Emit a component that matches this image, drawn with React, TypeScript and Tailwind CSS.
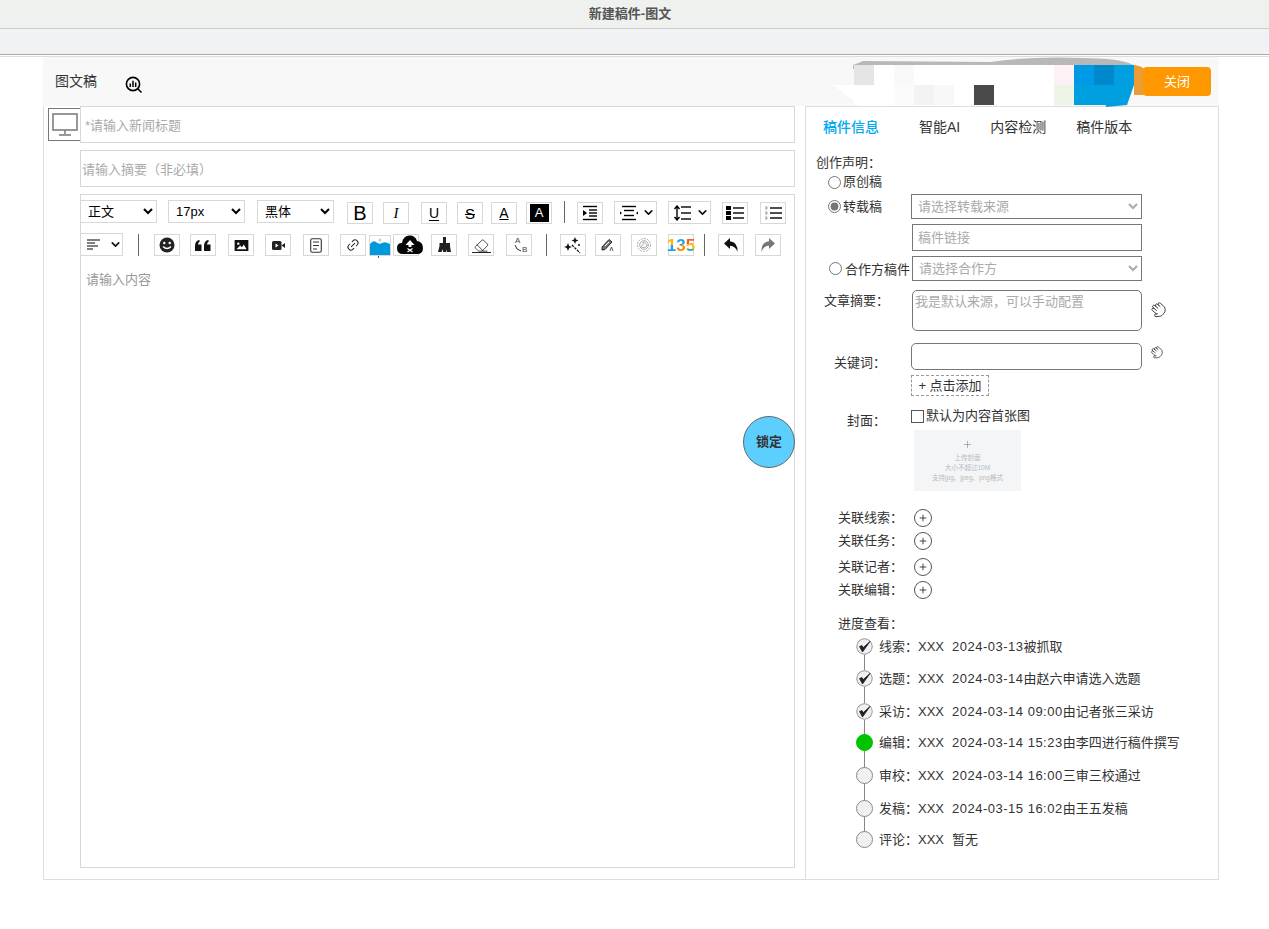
import React from "react";
import { ChevronDown, Eraser, Hand, Link2, Plus } from "lucide-react";

const Btn = ({ className = "", children }: { className?: string; children?: React.ReactNode }) => (
  <div className={`w-[26px] h-[22px] shrink-0 border border-[#d8d8d8] bg-white flex items-center justify-center text-black ${className}`}>{children}</div>
);
const Divider = ({ className = "" }: { className?: string }) => <div className={`w-px h-[22px] bg-[#666] shrink-0 ${className}`} />;
const Sel = ({ value, className = "" }: { value: string; className?: string }) => (
  <select defaultValue={value} className={`h-[23px] shrink-0 border border-[#d8d8d8] bg-white text-[13px] text-black pl-[3px] ${className}`}>
    <option>{value}</option>
  </select>
);
const Lines = ({ ys, x1 = 3, x2 = 17 }: { ys: number[]; x1?: number; x2?: number }) => (
  <>{ys.map((y) => <line key={y} x1={x1} x2={x2} y1={y} y2={y} stroke="#000" strokeWidth="1.4" />)}</>
);
const Chev = () => <ChevronDown size={13} strokeWidth={3} className="text-[#111] shrink-0" />;

const Check = () => (
  <svg width="17" height="17" viewBox="0 0 17 17" className="shrink-0 bg-white rounded-full">
    <circle cx="8.5" cy="8.5" r="7.8" fill="#f0f0f0" stroke="#888" />
    <path d="M3.5 8.5 L6.5 14 L14 3.5 L7.2 9.6 L6 7.6 Z" fill="#222" stroke="#222" strokeWidth="0.8" strokeLinejoin="round" />
  </svg>
);
const Dot = ({ green }: { green?: boolean }) => (
  <div className={`w-[17px] h-[17px] shrink-0 rounded-full border ${green ? "bg-[#00c400] border-[#00c400]" : "bg-[#f0f0f0] border-[#888]"}`} />
);

const steps: { label: string; date: string; rest: string; mt: string; kind: "check" | "green" | "dot" }[] = [
  { label: "线索", date: "2024-03-13", rest: "被抓取", mt: "mt-0", kind: "check" },
  { label: "选题", date: "2024-03-14", rest: "由赵六申请选入选题", mt: "mt-[15px]", kind: "check" },
  { label: "采访", date: "2024-03-14 09:00", rest: "由记者张三采访", mt: "mt-[16px]", kind: "check" },
  { label: "编辑", date: "2024-03-14 15:23", rest: "由李四进行稿件撰写", mt: "mt-[14px]", kind: "green" },
  { label: "审校", date: "2024-03-14 16:00", rest: "三审三校通过", mt: "mt-[16px]", kind: "dot" },
  { label: "发稿", date: "2024-03-15 16:02", rest: "由王五发稿", mt: "mt-[16px]", kind: "dot" },
  { label: "评论", date: "", rest: "暂无", mt: "mt-[14px]", kind: "dot" },
];

const Relation = ({ label, mt }: { label: string; mt: string }) => (
  <div className={`flex items-center h-[18px] pl-[32px] ${mt}`}>
    <span className="w-[76px] shrink-0">{label}：</span>
    <div className="w-[18px] h-[18px] rounded-full border border-[#555] flex items-center justify-center">
      <Plus size={10} strokeWidth={2} className="text-[#222]" />
    </div>
  </div>
);

export default function App() {
  return (
    <div className="min-h-[929px] bg-white font-['Liberation_Sans','Noto_Sans_CJK_SC',sans-serif] text-[#333]">
      <div className="h-[29px] pr-[9px] bg-[#eef1ee] border-b border-[#ccc] flex items-center justify-center text-[13px] font-bold text-[#555]">新建稿件-图文</div>
      <div className="h-[26px] bg-[#f1f2f4] border-b border-[#aaa]" />
      <div className="h-[2px] border-b border-[#ddd]" />
      <div className="ml-[43px] w-[1176px]">
        <div className="relative h-[49px] bg-[#f8f8f8] flex items-center pl-[12px]">
          <span className="text-[14px] text-[#333]">图文稿</span>
          <svg width="18" height="18" viewBox="0 0 18 18" className="ml-[28px] mt-[6px]">
            <circle cx="8" cy="8" r="6.6" fill="none" stroke="#000" strokeWidth="1.6" />
            <path d="M5.3 7.5V11M8 4.8V11M10.7 6.5V11" stroke="#000" strokeWidth="1.5" />
            <path d="M12.8 12.8L16.5 16.5" stroke="#000" strokeWidth="1.6" />
          </svg>
          <svg width="320" height="52" viewBox="0 0 320 52" className="absolute left-[788px] top-0">
            <path d="M22 8 L32 4 L160 5 Q200 -1 250 1 Q290 1 302 8 L302 12 L22 12 Z" fill="#b8b8b8" />
            <path d="M2 28 L223 28 L223 49 L30 49 Z" fill="#fff" />
            <rect x="23" y="8" width="220" height="40" fill="#fff" />
            <rect x="23" y="8" width="20" height="20" fill="#e5e5e5" />
            <rect x="63" y="8" width="20" height="20" fill="#f9f9f9" />
            <rect x="63" y="28" width="20" height="20" fill="#fbfbfb" />
            <rect x="83" y="28" width="20" height="20" fill="#f3f3f3" />
            <rect x="103" y="28" width="20" height="20" fill="#f8f8f8" />
            <rect x="143" y="28" width="20" height="20" fill="#4a4a4a" />
            <rect x="223" y="8" width="20" height="20" fill="#fdf1f6" />
            <rect x="223" y="28" width="20" height="20" fill="#eef5e6" />
            <rect x="243" y="8" width="20" height="20" fill="#0099e6" />
            <rect x="263" y="8" width="20" height="20" fill="#0088cc" />
            <rect x="283" y="8" width="20" height="20" fill="#009fe0" />
            <rect x="243" y="28" width="43" height="20" fill="#009fe0" />
            <path d="M285 28 L303 28 L296 48 L275 50 L274 44 Z" fill="#009fe0" />
            <path d="M303 8 Q312 9 315 14 L315 38 L303 38 Z" fill="#eb9c32" />
          </svg>
          <div className="absolute left-[1100px] top-[10px] w-[68px] h-[29px] rounded-[4px] bg-[#ff9800] text-white text-[13px] flex items-center justify-center">关闭</div>
        </div>

        <div className="h-[774px] flex border-l border-r border-b border-[#ddd]">
          <div className="w-[761px] shrink-0 flex">
            <div className="ml-[4px] mt-[2px] w-[33px] h-[33px] shrink-0 border border-[#777] flex items-center justify-center">
              <svg width="26" height="25" viewBox="0 0 26 25">
                <rect x="1" y="2" width="24" height="16" fill="none" stroke="#777" strokeWidth="1.5" />
                <path d="M13 18V22M7 23H19" stroke="#777" strokeWidth="1.5" />
              </svg>
            </div>
            <div className="-ml-px w-[715px] shrink-0">
              <div className="h-[37px] border border-[#d8d8d8] flex items-center pl-[4px] pt-[2px] text-[13px] text-[#aaa]">*请输入新闻标题</div>
              <div className="h-[37px] mt-[7px] border border-[#d8d8d8] flex items-center pl-[1px] pt-[2px] text-[13px] text-[#aaa]">请输入摘要（非必填）</div>
              <div className="relative h-[674px] mt-[7px] border border-[#d8d8d8]">
                <div className="flex items-start pt-[5px] h-[28px]">
                  <Sel value="正文" className="w-[77px] -ml-px" />
                  <Sel value="17px" className="w-[77px] ml-[11px]" />
                  <Sel value="黑体" className="w-[77px] ml-[12px]" />
                  <Btn className="ml-[13px] mt-[2px] text-[20px] text-[#222] leading-none">B</Btn>
                  <Btn className="ml-[10px] mt-[2px] text-[15px] italic font-['Liberation_Serif'] leading-none">I</Btn>
                  <Btn className="ml-[12px] mt-[2px] text-[14px] underline underline-offset-2 leading-none text-[#555]">U</Btn>
                  <Btn className="ml-[10px] mt-[2px] text-[15px] line-through leading-none text-[#555]">S</Btn>
                  <Btn className="ml-[8px] mt-[2px] text-[14px] underline underline-offset-1 leading-none text-[#555]">A</Btn>
                  <Btn className="ml-[9px] mt-[2px]"><span className="w-[19px] h-[18px] bg-black text-white text-[13px] leading-[18px] text-center">A</span></Btn>
                  <Divider className="ml-[12px] mt-[1px]" />
                  <Btn className="ml-[12px] mt-[2px]">
                    <svg width="20" height="16" viewBox="0 0 20 16"><Lines ys={[1.5, 14.5]} /><Lines ys={[5, 8, 11]} x1={9} /><path d="M3 5L7 8L3 11Z" fill="#000" /></svg>
                  </Btn>
                  <div className="ml-[11px] mt-[1px] w-[43px] h-[23px] border border-[#d8d8d8] flex items-center pl-[4px] gap-[3px] shrink-0">
                    <svg width="20" height="16" viewBox="0 0 20 16"><Lines ys={[1.5, 14.5]} /><Lines ys={[5.5, 10.5]} x1={5} x2={15} /><path d="M1 6.5L3 8L1 9.5ZM19 6.5L17 8L19 9.5Z" fill="#000" /></svg>
                    <Chev />
                  </div>
                  <div className="ml-[11px] mt-[1px] w-[43px] h-[23px] border border-[#d8d8d8] flex items-center pl-[3px] gap-[4px] shrink-0">
                    <svg width="20" height="16" viewBox="0 0 20 16"><Lines ys={[2, 8, 14]} x1={9} x2={19} /><path d="M5 1V15M2.5 4L5 1L7.5 4M2.5 12L5 15L7.5 12" stroke="#000" strokeWidth="1.4" fill="none" /></svg>
                    <Chev />
                  </div>
                  <Btn className="ml-[11px] mt-[2px]">
                    <svg width="20" height="14" viewBox="0 0 20 14"><Lines ys={[2, 7, 12]} x1={8} x2={19} /><rect x="1" y="0" width="5" height="4" /><rect x="1" y="5" width="5" height="4" /><rect x="1" y="10" width="5" height="4" /></svg>
                  </Btn>
                  <Btn className="ml-[12px] mt-[2px]">
                    <svg width="20" height="14" viewBox="0 0 20 14"><Lines ys={[2, 7, 12]} x1={7} x2={19} /><path d="M2 1H4V3H2M2 6H4V8H2M2 11H4V13H2" stroke="#777" strokeWidth=".7" fill="none" /></svg>
                  </Btn>
                </div>
                <div className="flex items-start h-[24px] mt-[10px]">
                  <div className="-ml-px w-[43px] h-[23px] border border-[#d8d8d8] flex items-center pl-[6px] gap-[9px] shrink-0">
                    <svg width="13" height="11" viewBox="0 0 13 11"><path d="M0 1H13M0 4H8M0 7H11M0 10H6" stroke="#000" strokeWidth="1" /></svg>
                    <Chev />
                  </div>
                  <Divider className="ml-[15px] mt-[1px]" />
                  <Btn className="ml-[15px] mt-[1px]">
                    <svg width="16" height="16" viewBox="0 0 16 16"><circle cx="8" cy="8" r="7.5" fill="#222" /><circle cx="5.3" cy="6" r="1.2" fill="#fff" /><circle cx="10.7" cy="6" r="1.2" fill="#fff" /><path d="M4 9.5Q8 13.5 12 9.5" stroke="#fff" strokeWidth="1.3" fill="none" /></svg>
                  </Btn>
                  <Btn className="ml-[10px] mt-[1px]">
                    <svg width="16" height="11" viewBox="0 0 16 11"><path d="M0 6Q0 1 4 0L5 1Q3 2.5 3 4.5H6.5V11H0ZM9 6Q9 1 13 0L14 1Q12 2.5 12 4.5H15.5V11H9Z" fill="#111" /></svg>
                  </Btn>
                  <Btn className="ml-[12px] mt-[1px]">
                    <svg width="15" height="11" viewBox="0 0 15 12"><rect width="15" height="12" fill="#111" /><circle cx="4" cy="4" r="1.3" fill="#fff" /><path d="M2 10L6 6L8 8L10 5L13 10Z" fill="#fff" /></svg>
                  </Btn>
                  <Btn className="ml-[11px] mt-[1px]">
                    <svg width="13" height="9" viewBox="0 0 13 9"><rect width="9.5" height="9" rx="1.5" fill="#222" /><path d="M9.5 4.5L13 2V7Z" fill="#222" /><path d="M3.5 2.5L6.5 4.5L3.5 6.5Z" fill="#fff" /></svg>
                  </Btn>
                  <Btn className="ml-[12px] mt-[1px]">
                    <svg width="12" height="15" viewBox="0 0 12 15"><rect x=".7" y=".7" width="10.6" height="13.6" rx="1.5" fill="none" stroke="#333" strokeWidth="1.1" /><path d="M3 4H9M3 7.5H9M3 11H7" stroke="#333" /></svg>
                  </Btn>
                  <Btn className="ml-[11px] mt-[1px]"><Link2 size={14} strokeWidth={1.7} className="-rotate-45 text-[#222]" /></Btn>
                  <div className="relative ml-[3px] mt-[2px] w-[22px] h-[21px] shrink-0 border border-[#d8d8d8] bg-white">
                    <svg width="20" height="19" viewBox="0 0 20 19" className="block">
                      <circle cx="10" cy="4" r="1.5" fill="#ccc" />
                      <path d="M0 19V8Q3 4 6 6Q9 9 12 7Q15 5 20 8V19Z" fill="#0099dd" />
                    </svg>
                    <div className="absolute left-[8px] top-[20px] w-px h-[2px] bg-[#555]" />
                  </div>
                  <div className="relative ml-[2px] mt-[1px] shrink-0">
                    <Btn />
                    <svg width="26" height="21" viewBox="0 0 26 21" className="absolute left-[4px] top-0">
                      <path d="M6 20Q0 20 0 14Q0 9 5 9Q6 2 12 1.5Q18 1 20 7Q26 8 26 14Q26 20 20 20Z" fill="#050505" />
                      <path d="M13 6L8.5 11H11.5V13H14.5V11H17.5Z" fill="#fff" />
                      <path d="M10.5 14.5L15.5 18M15.5 14.5L10.5 18" stroke="#fff" strokeWidth="1.2" />
                    </svg>
                  </div>
                  <Btn className="ml-[12px] mt-[1px]">
                    <svg width="15" height="16" viewBox="0 0 15 16"><path d="M6 0H9V6H13V9L14 15H10V12.5L9 15H6V12L4.5 15H1L2.5 9V6H6Z" fill="#222" /></svg>
                  </Btn>
                  <Btn className="ml-[11px] mt-[1px]">
                    <div className="flex flex-col items-center"><Eraser size={15} strokeWidth={1.3} className="text-[#222] -mb-[1px]" /><div className="w-[19px] h-px bg-[#222]" /></div>
                  </Btn>
                  <Btn className="ml-[12px] mt-[1px] relative">
                    <span className="absolute left-[8px] top-[2px] text-[8px] leading-none text-[#444]">A</span>
                    <span className="absolute left-[15px] top-[11px] text-[8px] leading-none text-[#444]">B</span>
                    <svg width="8" height="8" viewBox="0 0 8 8" className="absolute left-[7px] top-[10px]"><path d="M1 0Q2 5 7 6" stroke="#333" fill="none" /></svg>
                  </Btn>
                  <Divider className="ml-[14px] mt-[1px]" />
                  <Btn className="ml-[13px] mt-[1px]">
                    <svg width="18" height="17" viewBox="0 0 18 17">
                      <path d="M8 8L16 16" stroke="#111" strokeWidth="1.2" strokeDasharray="2.5 1" />
                      <path d="M11 0L12 2.5L14.5 3.5L12 4.5L11 7L10 4.5L7.5 3.5L10 2.5Z" fill="#111" />
                      <path d="M4 6L5.2 9L8 10L5.2 11L4 14L2.8 11L0 10L2.8 9Z" fill="#111" />
                      <circle cx="15" cy="8" r="1" fill="#111" />
                    </svg>
                  </Btn>
                  <Btn className="ml-[9px] mt-[1px]">
                    <svg width="14" height="14" viewBox="0 0 14 14"><path d="M1 9L8 1.5L11 4L4 11.5L1 12Z" fill="#777" stroke="#222" /><path d="M4 8L8 4" stroke="#fff" /><path d="M9 13L10.5 9L12 13" fill="none" stroke="#333" strokeWidth=".8" /></svg>
                  </Btn>
                  <Btn className="ml-[10px] mt-[1px]">
                    <svg width="16" height="16" viewBox="0 0 16 16" fill="none" stroke="#888" strokeWidth=".7"><circle cx="8" cy="8" r="6.5" strokeDasharray="2 1" /><circle cx="8" cy="8" r="4.3" /><path d="M6 6Q9 4 10.5 7T8 10.5T6 8.5T8.5 7" /></svg>
                  </Btn>
                  <Btn className="ml-[11px] mt-[1px] text-[17px] font-bold leading-none">
                    <span className="bg-[linear-gradient(#ffb300_50%,#1aa3e8_50%)] bg-clip-text text-transparent">1</span>
                    <span className="bg-[linear-gradient(#1aa3e8_50%,#ff8a00_50%)] bg-clip-text text-transparent">3</span>
                    <span className="bg-[linear-gradient(#ff5a1f_40%,#ffc400_40%,#ffc400_70%,#1aa3e8_70%)] bg-clip-text text-transparent">5</span>
                  </Btn>
                  <Divider className="ml-[10px] mt-[1px]" />
                  <Btn className="ml-[13px] mt-[1px]">
                    <svg width="14" height="14" viewBox="0 0 14 14"><path d="M6 0V3.2Q14 4 13.5 14Q11.5 8 6 7.8V11L0 5.5Z" fill="#111" /></svg>
                  </Btn>
                  <Btn className="ml-[11px] mt-[1px]">
                    <svg width="14" height="14" viewBox="0 0 14 14"><path d="M8 0V3.2Q0 4 .5 14Q2.5 8 8 7.8V11L14 5.5Z" fill="#777" /></svg>
                  </Btn>
                </div>
                <div className="mt-[14px] pl-[5px] text-[13px] leading-[18px] text-[#999]">请输入内容</div>
                <div className="absolute right-[-1px] top-[221px] w-[52px] h-[52px] rounded-full bg-[#5ccfff] border border-[#666] flex items-center justify-center text-[13px] font-bold text-[#333]">锁定</div>
              </div>
            </div>
          </div>

          <div className="flex-1 border-l border-t border-[#ddd] text-[13px] text-[#333]">
            <div className="h-[40px] pt-[1px] flex items-center text-[14px] pl-[17px]">
              <span className="text-[#00aaee] font-medium">稿件信息</span>
              <span className="ml-[40px]">智能AI</span>
              <span className="ml-[30px]">内容检测</span>
              <span className="ml-[30px]">稿件版本</span>
            </div>
            <div className="mt-[8px] h-[16px] flex items-center pl-[10px]">创作声明：</div>
            <div className="mt-[3px] h-[16px] flex items-center pl-[22px]">
              <input type="radio" name="t" className="m-0 w-[13px] h-[13px] accent-[#777]" />
              <span className="ml-[2px]">原创稿</span>
            </div>
            <div className="mt-[4px] h-[25px] flex items-center pl-[22px]">
              <input type="radio" name="t" defaultChecked className="m-0 w-[13px] h-[13px] accent-[#777]" />
              <span className="ml-[2px] w-[68px] shrink-0 pt-[1px]">转载稿</span>
              <select disabled defaultValue="a" className="w-[231px] h-[25px] border border-[#777] bg-white text-[#aaa] text-[13px] pl-[2px]"><option value="a">请选择转载来源</option></select>
            </div>
            <div className="mt-[5px] ml-[106px] w-[230px] h-[27px] border border-[#777] flex items-center pl-[5px] text-[13px] text-[#aaa]">稿件链接</div>
            <div className="mt-[5px] h-[25px] flex items-center pl-[23px]">
              <input type="radio" name="t" className="m-0 w-[13px] h-[13px] accent-[#777]" />
              <span className="ml-[3px] w-[67px] shrink-0 whitespace-nowrap pt-[2px]">合作方稿件</span>
              <select disabled defaultValue="a" className="w-[230px] h-[25px] border border-[#777] bg-white text-[#aaa] text-[13px] pl-[2px]"><option value="a">请选择合作方</option></select>
            </div>
            <div className="mt-[9px] h-[41px] flex items-start pl-[18px]">
              <span className="w-[88px] shrink-0 mt-[1px]">文章摘要：</span>
              <div className="w-[230px] h-[41px] shrink-0 border border-[#777] rounded-[5px] pl-[2px] pt-[3px] text-[13px] leading-[16px] text-[#aaa]">我是默认来源，可以手动配置</div>
              <Hand size={16} strokeWidth={1.2} className="ml-[8px] mt-[12px] -rotate-[50deg] text-[#222]" />
            </div>
            <div className="mt-[12px] h-[27px] flex items-start pl-[28px]">
              <span className="w-[77px] shrink-0 mt-[12px] leading-[16px]">关键词：</span>
              <div className="w-[231px] h-[27px] shrink-0 border border-[#777] rounded-[5px] bg-white" />
              <Hand size={13} strokeWidth={1.2} className="ml-[8px] mt-[3px] -rotate-[50deg] text-[#222]" />
            </div>
            <div className="mt-[5px] ml-[105px] w-[78px] h-[21px] border border-dashed border-[#999] flex items-center justify-center text-[13px]">+ 点击添加</div>
            <div className="mt-[12px] flex items-start pl-[41px]">
              <span className="w-[64px] shrink-0 mt-[5px] leading-[16px]">封面：</span>
              <div>
                <div className="h-[16px] flex items-center text-[13px]">
                  <div className="w-[13px] h-[13px] border border-[#555] bg-white shrink-0" />
                  <span className="ml-[2px]">默认为内容首张图</span>
                </div>
                <div className="mt-[6px] ml-[3px] w-[107px] h-[61px] bg-[#f3f5f7] flex flex-col items-center justify-start">
                  <Plus size={11} strokeWidth={1} className="text-[#666] mt-[9px]" />
                  <span className="mt-[3px] text-[6.5px] leading-[10px] text-[#bbb] whitespace-nowrap">上传封面</span>
                  <span className="text-[6.5px] leading-[10px] text-[#b5bcc8] whitespace-nowrap">大小不超过10M</span>
                  <span className="text-[6.5px] leading-[10px] text-[#bbb] whitespace-nowrap">支持jpg、jpeg、png格式</span>
                </div>
              </div>
            </div>
            <Relation label="关联线索" mt="mt-[18px]" />
            <Relation label="关联任务" mt="mt-[5px]" />
            <Relation label="关联记者" mt="mt-[8px]" />
            <Relation label="关联编辑" mt="mt-[5px]" />
            <div className="mt-[17px] h-[16px] flex items-center pl-[32px]">进度查看：</div>
            <div className="relative mt-[6px] pl-[50px]">
              <div className="absolute left-[58px] top-[8px] w-px h-[192px] bg-[#888]" />
              {steps.map((s) => (
                <div key={s.label} className={`relative flex items-center h-[17px] ${s.mt}`}>
                  {s.kind === "check" ? <Check /> : <Dot green={s.kind === "green"} />}
                  <span className="ml-[6px] whitespace-nowrap">{s.label}：</span>
                  <span className="whitespace-nowrap">XXX</span>
                  {s.date ? <span className="ml-[8px] whitespace-nowrap tracking-[0.5px]">{s.date}</span> : <span className="ml-[8px]" />}
                  <span className="whitespace-nowrap">{s.rest}</span>
                </div>
              ))}
            </div>
          </div>
        </div>
      </div>
    </div>
  );
}
